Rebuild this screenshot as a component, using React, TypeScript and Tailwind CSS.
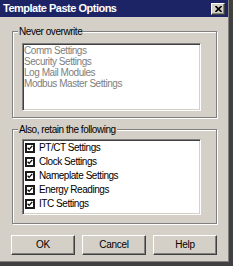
import React from 'react';

const neverOverwrite = ['Comm Settings', 'Security Settings', 'Log Mail Modules', 'Modbus Master Settings'];
const retained = ['PT/CT Settings', 'Clock Settings', 'Nameplate Settings', 'Energy Readings', 'ITC Settings'];

const font = { fontFamily: '"Liberation Sans", Arial, sans-serif' };

const CheckBox: React.FC = () => (
  <span className="w-[10px] h-[10px] border-2 border-[#1a1a1a] bg-white flex items-center justify-center shrink-0">
    <svg width="8" height="8" viewBox="0 0 8 8">
      <path d="M0.8 3.6 L2.9 5.8 L7 1.2" fill="none" stroke="#000" strokeWidth={1.7} />
    </svg>
  </span>
);

const WinButton: React.FC<{ label: string }> = ({ label }) => (
  <button
    type="button"
    className="w-[64px] h-[20px] bg-[#d4d0c8] border border-t-white border-l-white border-r-[#404040] border-b-[#404040] shadow-[inset_-1px_-1px_0_#808080] text-[10px] tracking-[-0.3px] text-black leading-none"
  >
    {label}
  </button>
);

const GroupLabel: React.FC<{ text: string }> = ({ text }) => (
  <span className="absolute left-[5px] top-[-7px] px-[1px] bg-[#d4d0c8] text-[10px] leading-[13px] tracking-[-0.45px] text-black">
    {text}
  </span>
);

const App: React.FC = () => {
  return (
    <div className="w-[233px] h-[266px] flex flex-col bg-[#404040]" style={font}>
      <div className="w-[229px] h-[262px] bg-[#d4d0c8] border-r border-b border-[#808080] flex flex-col">
        {/* Title bar */}
        <div className="h-[17px] shrink-0 bg-[#1c2466] flex items-center justify-between pl-[3px] pr-[3px]">
          <span className="text-white font-bold text-[11px] tracking-[-0.5px] leading-none">Template Paste Options</span>
          <span className="w-[14px] h-[12px] bg-[#d4d0c8] border border-t-white border-l-white border-r-[#404040] border-b-[#404040] shadow-[inset_-1px_-1px_0_#808080] flex items-center justify-center">
            <svg width="7" height="6" viewBox="0 0 7 6">
              <path d="M0.5 0 L6.5 6 M6.5 0 L0.5 6" stroke="#000" strokeWidth={1.6} />
            </svg>
          </span>
        </div>

        {/* Never overwrite */}
        <div className="relative shrink-0 mt-[14px] ml-[12px] w-[205px] h-[87px] border border-[#808080] shadow-[inset_1px_1px_0_#fff,1px_1px_0_#fff] pt-[11px] pl-[9px]">
          <GroupLabel text="Never overwrite" />
          <div className="w-[179px] h-[68px] bg-white border border-t-[#808080] border-l-[#808080] border-r-white border-b-white shadow-[inset_1px_1px_0_#404040,inset_-1px_-1px_0_#d4d0c8] pt-[1px] pl-[1px]">
            {neverOverwrite.map((item) => (
              <div key={item} className="h-[11px] leading-[11px] text-[10px] tracking-[-0.45px] text-[#808080]">
                {item}
              </div>
            ))}
          </div>
        </div>

        {/* Also, retain the following */}
        <div className="relative shrink-0 mt-[11px] ml-[12px] w-[205px] h-[95px] border border-[#808080] shadow-[inset_1px_1px_0_#fff,1px_1px_0_#fff] pt-[9px] pl-[9px]">
          <GroupLabel text="Also, retain the following" />
          <div className="w-[179px] h-[76px] bg-white border border-t-[#808080] border-l-[#808080] border-r-white border-b-white shadow-[inset_1px_1px_0_#404040,inset_-1px_-1px_0_#d4d0c8] pt-[1px] pl-[2px]">
            {retained.map((item) => (
              <div key={item} className="h-[14px] flex items-center gap-[4px]">
                <CheckBox />
                <span className="text-[10px] leading-none tracking-[-0.45px] text-black">{item}</span>
              </div>
            ))}
          </div>
        </div>

        {/* Buttons */}
        <div className="shrink-0 mt-[11px] ml-[11px] w-[206px] flex justify-between">
          <WinButton label="OK" />
          <WinButton label="Cancel" />
          <WinButton label="Help" />
        </div>
      </div>
    </div>
  );
};

export default App;
